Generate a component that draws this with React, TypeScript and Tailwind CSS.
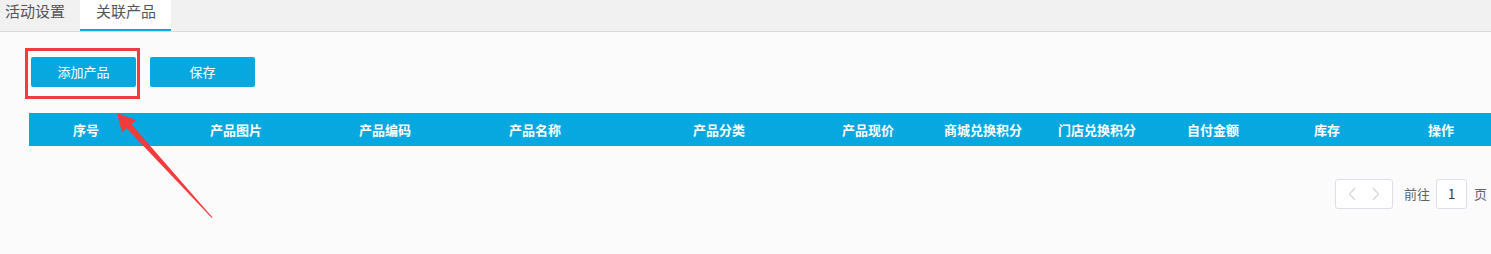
import React from "react";

const cols: { label: string; w: string }[] = [
  { label: "序号", w: "w-[137px]" },
  { label: "产品图片", w: "w-[149px]" },
  { label: "产品编码", w: "w-[150px]" },
  { label: "产品名称", w: "w-[184px]" },
  { label: "产品分类", w: "w-[149px]" },
  { label: "产品现价", w: "w-[102px]" },
  { label: "商城兑换积分", w: "w-[114px]" },
  { label: "门店兑换积分", w: "w-[129px]" },
  { label: "自付金额", w: "w-[127px]" },
  { label: "库存", w: "w-[114px]" },
  { label: "操作", w: "w-[60px]" },
];

export default function App() {
  return (
    <div
      className="relative h-[254px] w-[1491px] overflow-hidden bg-[#fbfbfb]"
      style={{ fontFamily: '"Noto Sans CJK SC", "Noto Sans", sans-serif' }}
    >
      {/* tabs */}
      <div className="flex h-[32px] border-b border-[#d9d9d9] bg-[#f1f1f1]">
        <div className="h-[31px] w-[80px] pl-[5px] text-[15px] leading-[21px] text-[#555]">
          活动设置
        </div>
        <div className="h-[31px] w-[91px] border-b-2 border-[#07a7e0] bg-white pl-[16px] text-[15px] leading-[21px] text-[#555]">
          关联产品
        </div>
      </div>

      <div className="pl-[29px] pt-[25px]">
        <div className="flex gap-[14px] pl-[2px]">
          <button className="h-[30px] w-[105px] rounded-[2px] bg-[#07a7e0] text-[13px] leading-[30px] text-white">
            添加产品
          </button>
          <button className="h-[30px] w-[105px] rounded-[2px] bg-[#07a7e0] text-[13px] leading-[30px] text-white">
            保存
          </button>
        </div>

        <div className="mt-[26px] flex h-[33px] items-center bg-[#07a7e0] pl-[44px] text-[13px] font-bold text-white">
          {cols.map((c) => (
            <div key={c.label} className={`${c.w} shrink-0 whitespace-nowrap`}>
              {c.label}
            </div>
          ))}
        </div>

        <div className="mt-[33px] flex items-center justify-end pr-[4px] text-[13px] text-[#606266]">
          <div className="flex h-[30px] w-[58px] items-center justify-between rounded-[3px] border border-[#dcdfe6] bg-white px-[12px]">
            <svg width="8" height="14" viewBox="0 0 8 14">
              <path d="M7 1 L1.5 7 L7 13" fill="none" stroke="#d8d8d8" strokeWidth="1.3" />
            </svg>
            <svg width="8" height="14" viewBox="0 0 8 14">
              <path d="M1 1 L6.5 7 L1 13" fill="none" stroke="#d8d8d8" strokeWidth="1.3" />
            </svg>
          </div>
          <span className="ml-[11px] leading-[30px]">前往</span>
          <div className="ml-[6px] flex h-[30px] w-[31px] items-center justify-center rounded-[3px] border border-[#dcdfe6] bg-white text-[#333]">
            1
          </div>
          <span className="ml-[7px] leading-[30px]">页</span>
        </div>
      </div>

      {/* annotation: red box */}
      <div className="absolute left-[25px] top-[48px] h-[51px] w-[115px] border-[3px] border-[#f03c3c]" />

      {/* annotation: arrow */}
      <svg className="absolute left-0 top-0" width="260" height="254" viewBox="0 0 260 254">
        <polygon
          points="117,113 136,120 131.6,124.6 212.6,217.6 211.8,218 126.6,128.2 122,132.5"
          fill="#f03c3c"
        />
      </svg>
    </div>
  );
}
